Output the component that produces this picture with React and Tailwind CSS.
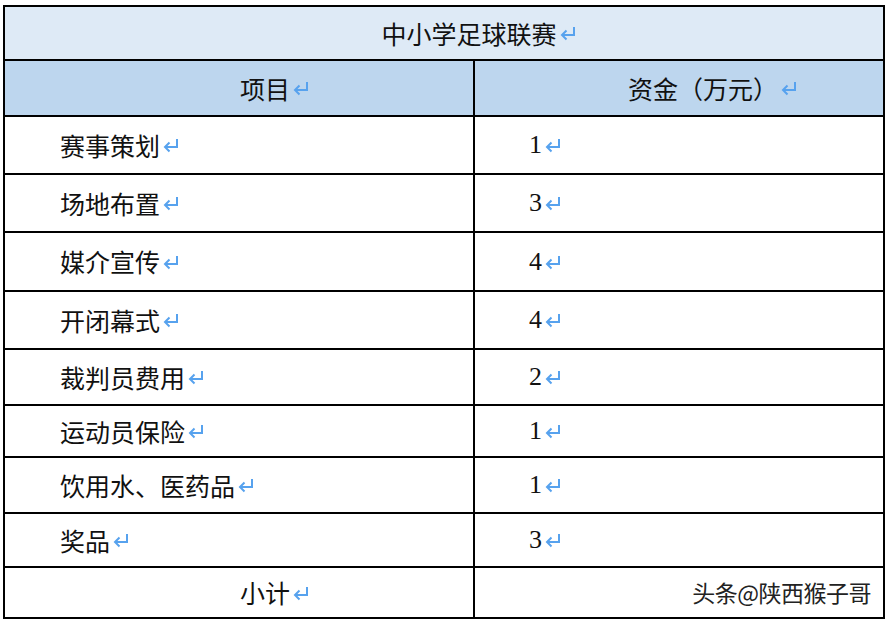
import React from 'react';

const Mark = () => (
  <svg width="18" height="16" viewBox="0 0 18 16" className="ml-[2px] shrink-0" fill="none" stroke="#57a2ee" strokeWidth="2">
    <path d="M15 2 V10 H3" />
    <path d="M7.5 5.5 L3 10 L7.5 14.5" />
  </svg>
);

const rows = [
  { name: '赛事策划', amount: '1', h: 'h-[58px]' },
  { name: '场地布置', amount: '3', h: 'h-[58px]' },
  { name: '媒介宣传', amount: '4', h: 'h-[59px]' },
  { name: '开闭幕式', amount: '4', h: 'h-[58px]' },
  { name: '裁判员费用', amount: '2', h: 'h-[56px]' },
  { name: '运动员保险', amount: '1', h: 'h-[52px]' },
  { name: '饮用水、医药品', amount: '1', h: 'h-[56px]' },
  { name: '奖品', amount: '3', h: 'h-[54px]' },
];

const cjk = { fontFamily: '"Noto Sans CJK SC", "Liberation Serif", serif' };
const num = { fontFamily: '"Liberation Serif", serif' };

export default function App() {
  return (
    <div className="w-[890px] h-[626px] bg-white pt-[5px] pl-[3px]" style={cjk}>
      <div className="w-[882px] border-2 border-black text-[25px] text-[#111] leading-none">
        {/* 标题 */}
        <div className="h-[54px] bg-[#deeaf6] border-b-2 border-black flex items-center justify-center pl-[70px]">
          <span>中小学足球联赛</span>
          <Mark />
        </div>

        {/* 表头 */}
        <div className="h-[56px] bg-[#bdd6ee] border-b-2 border-black grid grid-cols-[470px_1fr]">
          <div className="border-r-2 border-black flex items-center justify-center pl-[72px]">
            <span>项目</span>
            <Mark />
          </div>
          <div className="flex items-center justify-center pl-[68px]">
            <span>资金（万元）</span>
            <Mark />
          </div>
        </div>

        {rows.map((r) => (
          <div key={r.name} className={`${r.h} border-b-2 border-black grid grid-cols-[470px_1fr]`}>
            <div className="border-r-2 border-black flex items-center pl-[55px]">
              <span>{r.name}</span>
              <Mark />
            </div>
            <div className="flex items-center pl-[54px]">
              <span className="text-[26px]" style={num}>{r.amount}</span>
              <Mark />
            </div>
          </div>
        ))}

        {/* 小计 */}
        <div className="h-[49px] grid grid-cols-[470px_1fr]">
          <div className="border-r-2 border-black flex items-center justify-center pl-[72px]">
            <span>小计</span>
            <Mark />
          </div>
          <div className="flex items-center justify-end pr-[12px]">
            <span
              className="text-[23px] text-[#222] tracking-[-0.5px]"
              style={{ fontFamily: '"Noto Sans CJK SC", sans-serif', textShadow: '1px 1px 0 #fff, -1px -1px 0 #fff, 1px -1px 0 #fff, -1px 1px 0 #fff' }}
            >
              头条@陕西猴子哥
            </span>
          </div>
        </div>
      </div>
    </div>
  );
}
